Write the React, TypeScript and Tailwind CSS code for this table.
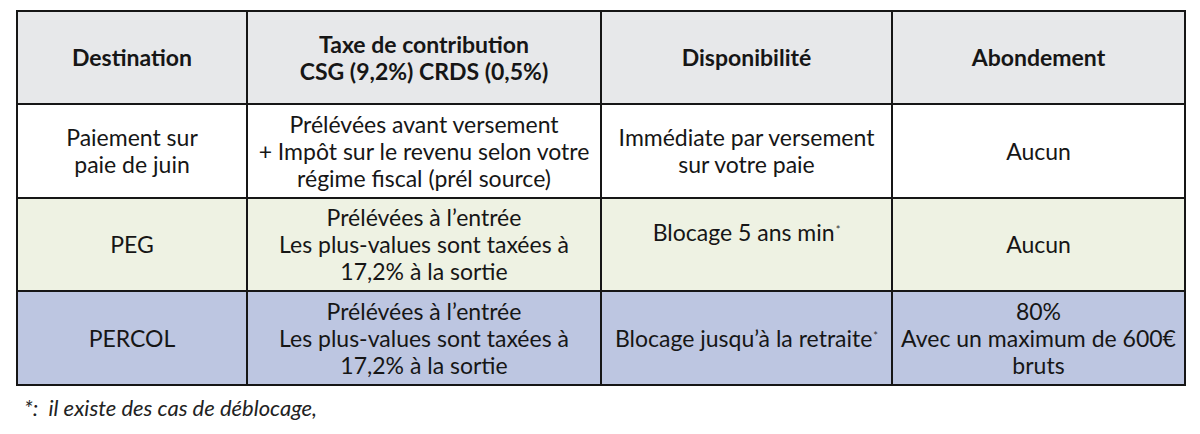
const rows = [
  {
    bg: 'bg-white',
    dest: 'Paiement sur\npaie de juin',
    taxe: 'Prélévées avant versement\n+ Impôt sur le revenu selon votre\nrégime fiscal (prél source)',
    dispo: 'Immédiate par versement\nsur votre paie',
    star: false,
    abond: 'Aucun',
  },
  {
    bg: 'bg-[#eef2e3]',
    dest: 'PEG',
    taxe: 'Prélévées à l’entrée\nLes plus-values sont taxées à\n17,2% à la sortie',
    dispo: 'Blocage 5 ans min',
    star: true,
    abond: 'Aucun',
  },
  {
    bg: 'bg-[#bdc6e1]',
    dest: 'PERCOL',
    taxe: 'Prélévées à l’entrée\nLes plus-values sont taxées à\n17,2% à la sortie',
    dispo: 'Blocage jusqu’à la retraite',
    star: true,
    abond: '80%\nAvec un maximum de 600€\nbruts',
  },
];

const cell = 'border-2 border-[#161616] text-center align-middle px-1 whitespace-pre-line';

export default function App() {
  return (
    <div className="w-[1200px] h-[434px] bg-white font-['Lato','Open_Sans',sans-serif] text-[#161616] pt-[10px] pl-[16px]">
      <table className="table-fixed border-collapse w-[1168px] text-[23px] leading-[27px]">
        <colgroup>
          <col className="w-[230px]" />
          <col className="w-[354px]" />
          <col className="w-[291px]" />
          <col className="w-[293px]" />
        </colgroup>
        <thead>
          <tr className="h-[93px] bg-[#e7e8ea] font-bold">
            <th className={cell}>Destination</th>
            <th className={cell}>{'Taxe de contribution\nCSG (9,2%) CRDS (0,5%)'}</th>
            <th className={cell}>Disponibilité</th>
            <th className={cell}>Abondement</th>
          </tr>
        </thead>
        <tbody>
          {rows.map((r, i) => (
            <tr key={i} className={`${r.bg} ${i === 1 ? 'h-[93px]' : 'h-[94px]'}`}>
              <td className={cell}>{r.dest}</td>
              <td className={cell}>{r.taxe}</td>
              <td className={`${cell} ${i === 1 ? 'pb-[24px]' : ''}`}>
                {r.dispo}
                {r.star && <sup className="text-[11px] text-[#333] ml-[1px] relative -top-[7px]">*</sup>}
              </td>
              <td className={cell}>{r.abond}</td>
            </tr>
          ))}
        </tbody>
      </table>
      <p className="mt-[8px] ml-[8px] italic text-[22px] leading-[28px] text-[#222]">
        *:&nbsp;&nbsp;il existe des cas de déblocage,
      </p>
    </div>
  );
}
